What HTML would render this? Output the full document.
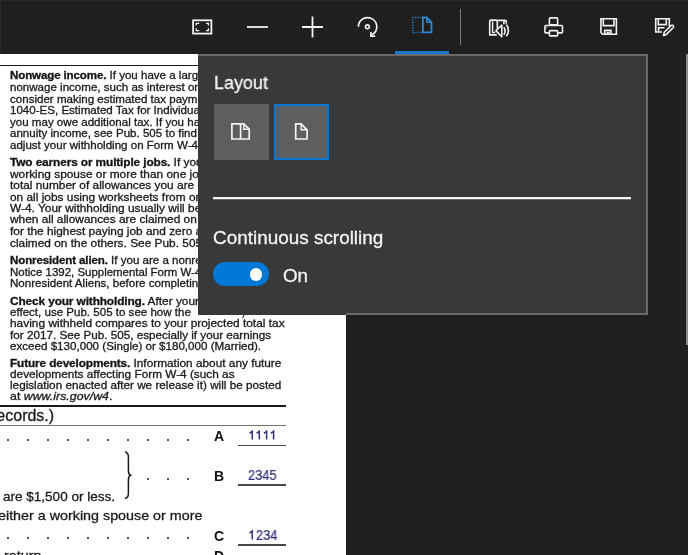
<!DOCTYPE html>
<html><head><meta charset="utf-8">
<style>
html,body{margin:0;padding:0;}
body{width:688px;height:555px;overflow:hidden;background:#1f1f1f;position:relative;font-family:"Liberation Sans",sans-serif;}
.page{position:absolute;left:0;top:54px;width:346px;height:501px;background:#fff;overflow:hidden;}
.pg{position:absolute;left:0;top:-54px;width:346px;height:555px;}
.tl{position:absolute;left:10.1px;white-space:nowrap;font-size:10.8px;line-height:12px;color:#1a1a1a;transform-origin:0 0;will-change:transform;-webkit-text-stroke:0.3px #1a1a1a;}
.tl b{font-weight:bold;color:#111;letter-spacing:-0.12px;}
.hr{position:absolute;left:0;background:#222;}
.dot{position:absolute;width:2px;height:2px;border-radius:50%;background:#222;}
.lbl{position:absolute;font-weight:bold;font-size:14px;line-height:16px;color:#111;will-change:transform;}
.num{position:absolute;font-size:14px;line-height:16px;color:#30307c;transform:scaleX(0.92);transform-origin:0 0;will-change:transform;-webkit-text-stroke:0.2px #30307c;}
.ul{position:absolute;left:237.5px;width:48.5px;height:1.6px;background:#4a4a4a;}
.ic{position:absolute;left:0;top:0;}
.panel{position:absolute;left:198px;top:54px;width:448px;height:257px;background:#393939;border:2px solid rgba(255,255,255,0.25);border-left:0;background-clip:border-box;}
.ptxt{position:absolute;color:#f4f4f4;font-size:18.8px;line-height:22px;white-space:nowrap;transform-origin:0 0;will-change:transform;-webkit-text-stroke:0.3px #f4f4f4;}
</style></head><body>
<div class="page"><div class="pg">
<div class="hr" style="top:65px;width:346px;height:1.2px;background:#1a1a1a"></div>
<div class="tl" style="top:69.40px;transform:scaleX(1.07)"><b>Nonwage income.</b> If you have a large amount of</div>
<div class="tl" style="top:81.20px;transform:scaleX(1.07)">nonwage income, such as interest or dividends,</div>
<div class="tl" style="top:92.60px;transform:scaleX(1.07)">consider making estimated tax payments using Form</div>
<div class="tl" style="top:104.20px;transform:scaleX(1.07)">1040-ES, Estimated Tax for Individuals. Otherwise,</div>
<div class="tl" style="top:115.70px;transform:scaleX(1.07)">you may owe additional tax. If you have pension or</div>
<div class="tl" style="top:127.40px;transform:scaleX(1.07)">annuity income, see Pub. 505 to find out if you should</div>
<div class="tl" style="top:138.80px;transform:scaleX(1.07)">adjust your withholding on Form W-4 or W-4P.</div>
<div class="tl" style="top:155.90px;transform:scaleX(1.1)"><b>Two earners or multiple jobs.</b> If you have a</div>
<div class="tl" style="top:167.80px;transform:scaleX(1.1)">working spouse or more than one job, figure the</div>
<div class="tl" style="top:179.30px;transform:scaleX(1.1)">total number of allowances you are entitled to claim</div>
<div class="tl" style="top:190.60px;transform:scaleX(1.1)">on all jobs using worksheets from only one Form</div>
<div class="tl" style="top:202.00px;transform:scaleX(1.1)">W-4. Your withholding usually will be most accurate</div>
<div class="tl" style="top:213.20px;transform:scaleX(1.1)">when all allowances are claimed on the Form W-4</div>
<div class="tl" style="top:224.90px;transform:scaleX(1.1)">for the highest paying job and zero allowances are</div>
<div class="tl" style="top:236.60px;transform:scaleX(1.1)">claimed on the others. See Pub. 505 for details.</div>
<div class="tl" style="top:254.30px;transform:scaleX(1.07)"><b>Nonresident alien.</b> If you are a nonresident alien, see</div>
<div class="tl" style="top:265.70px;transform:scaleX(1.06)">Notice 1392, Supplemental Form W-4 Instructions for</div>
<div class="tl" style="top:276.90px;transform:scaleX(1.07)">Nonresident Aliens, before completing this form.</div>
<div class="tl" style="top:294.70px;transform:scaleX(1.1)"><b>Check your withholding.</b> After your Form W-4 takes</div>
<div class="tl" style="top:306.10px;transform:scaleX(1.07)">effect, use Pub. 505 to see how the</div>
<div class="tl" style="top:317.20px;transform:scaleX(1.1026)">having withheld compares to your projected total tax</div>
<div class="tl" style="top:328.90px;transform:scaleX(1.0824)">for 2017. See Pub. 505, especially if your earnings</div>
<div class="tl" style="top:340.00px;transform:scaleX(1.075)">exceed $130,000 (Single) or $180,000 (Married).</div>
<div class="tl" style="top:357.20px;transform:scaleX(1.095)"><b>Future developments.</b> Information about any future</div>
<div class="tl" style="top:368.00px;transform:scaleX(1.093)">developments affecting Form W-4 (such as</div>
<div class="tl" style="top:378.70px;transform:scaleX(1.0862)">legislation enacted after we release it) will be posted</div>
<div class="tl" style="top:390.20px;transform:scaleX(1.145)">at <i>www.irs.gov/w4</i>.</div>
<svg style="position:absolute;left:0;top:0" width="346" height="555" fill="none" stroke="#333" stroke-width="1.1"><path d="M243.9 315L242.6 318.4"/></svg>
<div class="hr" style="top:404.5px;width:286px;height:2px;background:#1a1a1a"></div>
<div class="tl" style="left:-9px;top:406px;font-size:16px;line-height:20px;transform:none">records.)</div>
<div class="hr" style="top:424.5px;width:286px;height:1.2px;background:#707070"></div>
<div class="dot" style="left:7.00px;top:439.40px"></div>
<div class="dot" style="left:27.00px;top:439.40px"></div>
<div class="dot" style="left:47.00px;top:439.40px"></div>
<div class="dot" style="left:67.00px;top:439.40px"></div>
<div class="dot" style="left:87.00px;top:439.40px"></div>
<div class="dot" style="left:107.00px;top:439.40px"></div>
<div class="dot" style="left:127.00px;top:439.40px"></div>
<div class="dot" style="left:147.00px;top:439.40px"></div>
<div class="dot" style="left:167.00px;top:439.40px"></div>
<div class="dot" style="left:187.00px;top:439.40px"></div>
<div class="dot" style="left:147.00px;top:478.00px"></div>
<div class="dot" style="left:167.00px;top:478.00px"></div>
<div class="dot" style="left:187.00px;top:478.00px"></div>
<div class="dot" style="left:7.00px;top:536.50px"></div>
<div class="dot" style="left:27.00px;top:536.50px"></div>
<div class="dot" style="left:47.00px;top:536.50px"></div>
<div class="dot" style="left:67.00px;top:536.50px"></div>
<div class="dot" style="left:87.00px;top:536.50px"></div>
<div class="dot" style="left:107.00px;top:536.50px"></div>
<div class="dot" style="left:127.00px;top:536.50px"></div>
<div class="dot" style="left:147.00px;top:536.50px"></div>
<div class="dot" style="left:167.00px;top:536.50px"></div>
<div class="dot" style="left:187.00px;top:536.50px"></div>
<div class="lbl" style="left:214px;top:428px">A</div>
<svg style="position:absolute;left:0;top:0" width="346" height="555" fill="none" stroke="#30307c" stroke-width="1.5"><path d="M249.5 433.3L252.2 431.2V439.5M256.6 433.3L259.3 431.2V439.5M263.9 433.3L266.6 431.2V439.5M270.9 433.3L273.6 431.2V439.5M249.5 533.1L252.2 531V539.4"/></svg>
<div class="ul" style="top:444.5px"></div>
<svg style="position:absolute;left:0;top:0" width="346" height="555" fill="none" stroke="#1a1a1a" stroke-width="1.5"><path d="M125 451.8C127.5 452.3 128.4 454 128.4 457V470.5C128.4 473 129 474.6 130.4 475.2C129 475.8 128.4 477.4 128.4 480V493.5C128.4 496.5 127.5 498 125 498.5"/></svg>
<div class="lbl" style="left:214px;top:467.5px">B</div>
<div class="num" style="left:248px;top:466.8px">2345</div>
<div class="ul" style="top:484.3px"></div>
<div class="tl" style="left:2.5px;top:489px;font-size:13px;line-height:16px;transform:scaleX(1.04)">are $1,500 or less.</div>
<div class="tl" style="left:-2.5px;top:508px;font-size:13.5px;line-height:16px;transform:scaleX(1.06)">either a working spouse or more</div>
<div class="lbl" style="left:214px;top:527.5px">C</div>
<div class="num" style="left:255.5px;top:526.5px">234</div>
<div class="ul" style="top:544.2px"></div>
<div class="tl" style="left:4px;top:548px;font-size:13.5px;line-height:16px;transform:scaleX(1.06)">return</div>
<div class="lbl" style="left:214px;top:548px">D</div>
</div></div>
<div style="position:absolute;left:686px;top:54px;width:2px;height:291px;background:#8a8a8a"></div>
<div style="position:absolute;left:0;top:0;width:688px;height:1px;background:#2a2a2a"></div>
<div style="position:absolute;left:0;top:0;width:1px;height:54px;background:#2a2a2a"></div>

<svg class="ic" width="688" height="54" viewBox="0 0 688 54" fill="none" stroke="#f2f2f2" stroke-width="1.8">
  <!-- fit page -->
  <rect x="193.1" y="20.3" width="18.3" height="13.3"/>
  <path d="M196.2 25.6V23.3H199.2M206 23.3H208.4V25.6M196.2 28.2V30.6H199.2M206 30.6H208.4V28.2" stroke-width="1.3"/>
  <!-- minus -->
  <path d="M247 27H268" />
  <!-- plus -->
  <path d="M302 27H323M312.5 16.5V37.5" />
  <!-- rotate -->
  <path d="M358.4 26.8A9.2 9.2 0 1 1 372.2 34.8" stroke-width="1.7"/>
  <path d="M370.9 31.9V36.1H375.1" stroke-width="1.7"/>
  <circle cx="367.4" cy="26.8" r="1.9" stroke-width="1.6"/>
  <!-- layout (blue) -->
  <g stroke="#2b87d8">
    <path d="M421.5 17.6H412.9V32.5H421.5" stroke-dasharray="1.3 1.3" stroke-width="1.5" opacity="0.9"/>
    <path d="M422.9 17.5H426.8L431.5 22.3V32.4H422.9Z"/>
    <path d="M426.8 17.5V22.3H431.5" stroke-width="1.4"/>
  </g>
</svg>
<div style="position:absolute;left:460px;top:9px;width:1px;height:36px;background:#7c7c7c"></div>
<svg class="ic" width="688" height="54" viewBox="0 0 688 54" fill="none" stroke="#f2f2f2" stroke-width="1.6">
  <!-- read aloud -->
  <path d="M496.8 34.9H489.7V21.4Q489.7 20.1 491 20.1H496Q497.3 20.1 497.3 21.4V28.2"/>
  <path d="M492.6 21.2V32.5H495.2" stroke-width="1.4"/>
  <path d="M497.3 21.6Q497.3 20.4 498.6 20.4H505Q506.3 20.4 506.3 21.7V23.8M503.9 21V24.2" />
  <path d="M495.9 30.6L501.8 25.2V36.7Z" stroke-linejoin="round"/>
  <path d="M503.9 27.3A6.9 6.9 0 0 1 503.9 34.7" />
  <path d="M506.3 24.6A9.1 9.1 0 0 1 506.3 36.2" />
  <!-- print -->
  <rect x="549.4" y="17.9" width="8.2" height="7" rx="0.8"/>
  <rect x="544.9" y="25.5" width="17.6" height="7.4" rx="1"/>
  <rect x="549.4" y="30.6" width="8.2" height="5.3" rx="0.8" fill="#1f1f1f"/>
  <circle cx="546.8" cy="27.6" r="0.6" fill="#f2f2f2" stroke="none"/>
  <!-- save -->
  <path d="M600.9 18.7H616.4V34.2H602.6L600.9 32.5Z"/>
  <path d="M603.3 18.7V25.6H614V18.7"/>
  <path d="M604.7 34.2V30.4H611V34.2"/>
  <path d="M607.2 34V32.3H609V34" stroke-width="1.3"/>
  <!-- save as -->
  <path d="M662 32H655.7V18.7H669.3V26.5"/>
  <path d="M658.3 18.7V24.6H666.3V18.7"/>
  <path d="M658.6 32V27.8H664.5"/>
  <path d="M663.5 35.5L664.3 32.3L671.2 25.4A1.5 1.5 0 0 1 673.3 27.5L666.4 34.4Z" stroke-linejoin="round"/>
</svg>

<div style="position:absolute;left:395px;top:51px;width:54px;height:3px;background:#1876cc"></div>
<div class="panel">
  <div class="ptxt" style="left:15.6px;top:15.5px;transform:scaleX(0.955)">Layout</div>
  <div style="position:absolute;left:15.5px;top:48.2px;width:55.5px;height:55.5px;background:#5e5e5e"></div>
  <div style="position:absolute;left:75.7px;top:48.2px;width:55px;height:55.5px;box-sizing:border-box;background:#5e5e5e;border:2.8px solid #0078d7"></div>
  <svg style="position:absolute;left:0;top:0" width="448" height="260" viewBox="198 56 448 260" fill="none" stroke="#f4f4f4" stroke-width="1.7">
    <path d="M231.9 123.8H243.8L249.2 129.2V139H231.9Z M240.6 123.8V139"/>
    <path d="M243.8 123.8V129.2H249.2" stroke-width="1.4"/>
    <path d="M295.7 123.8H301.1L307.1 129.8V139H295.7Z"/>
    <path d="M301.1 123.8V129.8H307.1" stroke-width="1.4"/>
  </svg>
  <div style="position:absolute;left:15px;top:141px;width:418px;height:2px;background:#f4f4f4;box-shadow:0 0.6px 0 rgba(244,244,244,0.45)"></div>
  <div class="ptxt" style="left:15.2px;top:171px;transform:scaleX(1.007)">Continuous scrolling</div>
  <div style="position:absolute;left:15.3px;top:206.3px;width:55.7px;height:24px;border-radius:12px;background:#0078d7"></div>
  <div style="position:absolute;left:51.8px;top:212.2px;width:12.6px;height:12.6px;border-radius:50%;background:#fff"></div>
  <div class="ptxt" style="left:85px;top:208.5px">On</div>
</div>
<div style="position:absolute;left:198px;top:313px;width:148px;height:2px;background:#393939"></div>
</body></html>
